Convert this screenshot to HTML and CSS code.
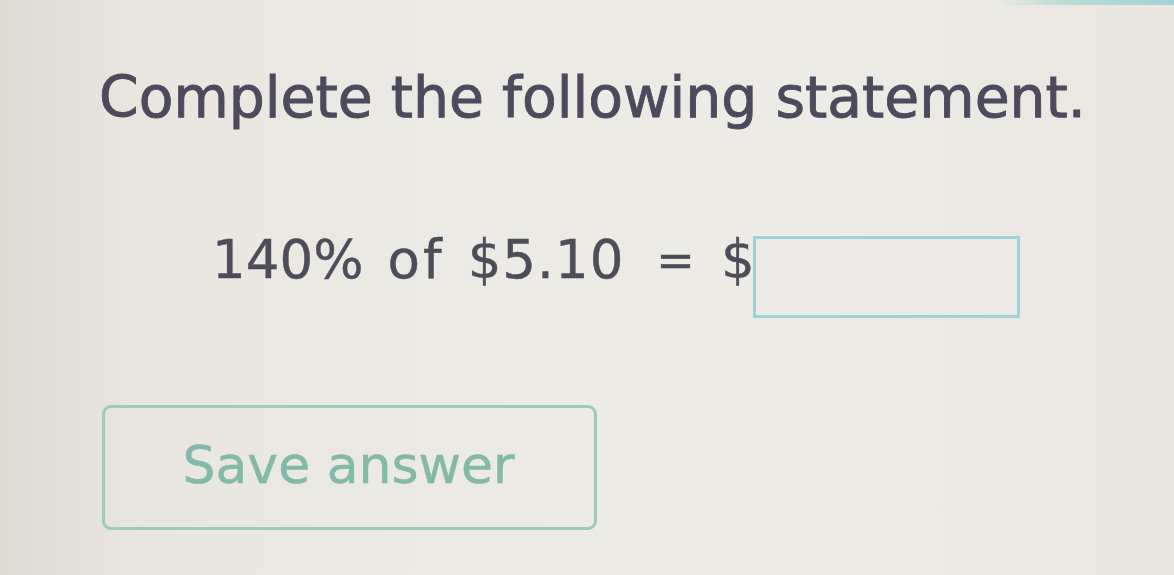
FILE: index.html
```html
<!DOCTYPE html>
<html>
<head>
<meta charset="utf-8">
<link rel="stylesheet" href="styles.css">
</head>
<body>
<div class="page">
  <div class="topstrip"></div>
  <h1 class="title">Complete the following statement.</h1>
  <div class="statement">
    <span class="word pct">140%</span>
    <span class="word of">of</span>
    <span class="word money">$5.10</span>
    <span class="word eq">=</span>
    <span class="word cur">$</span>
    <span class="answer-box"></span>
  </div>
  <div class="btn">Save answer</div>
</div>
</body>
</html>
```
FILE: styles.css
```css
html, body {
  margin: 0;
  padding: 0;
}
body {
  width: 1174px;
  height: 575px;
  overflow: hidden;
  background: linear-gradient(90deg, #dedbd3 0%, #e8e6df 12%, #eceae4 40%, #ecebe6 70%, #eae6e0 100%);
  font-family: "DejaVu Sans", Verdana, sans-serif;
}
.page {
  display: flex;
  flex-direction: column;
  align-items: flex-start;
  filter: blur(0.6px);
}
.topstrip {
  align-self: stretch;
  height: 5px;
  background: linear-gradient(90deg, rgba(160, 210, 214, 0) 0%, rgba(160, 210, 214, 0) 85%, #b9dcd6 91%, #9fd1d6 100%);
}
.title {
  margin: 59px 0 0 99px;
  font-size: 56.8px;
  line-height: 67px;
  font-weight: normal;
  color: #4c4a5c;
  -webkit-text-stroke: 0.9px #4c4a5c;
  white-space: nowrap;
}
.statement {
  display: flex;
  align-items: flex-start;
  margin: 99px 0 0 212px;
}
.word {
  display: block;
  font-size: 53px;
  line-height: 60px;
  color: #4d4c58;
  -webkit-text-stroke: 0.4px #4d4c58;
  white-space: nowrap;
}
.of {
  margin-left: 24px;
  letter-spacing: 3px;
}
.money {
  margin-left: 23px;
  letter-spacing: 1px;
}
.eq {
  font-size: 46px;
  margin-left: 32px;
}
.cur {
  margin-left: 26px;
}
.answer-box {
  display: block;
  width: 267px;
  height: 82px;
  margin-top: 6px;
  margin-left: -2px;
  box-sizing: border-box;
  border: 3px solid #9fd2d6;
  background: #eceae6;
}
.btn {
  margin: 87px 0 0 102px;
  width: 495px;
  height: 125px;
  box-sizing: border-box;
  border: 3px solid #9ccabb;
  border-radius: 9px;
  display: flex;
  align-items: center;
  justify-content: center;
  font-size: 52px;
  color: #82b9a7;
  -webkit-text-stroke: 0.5px #82b9a7;
  padding-bottom: 6px;
  padding-right: 2px;
}
```
